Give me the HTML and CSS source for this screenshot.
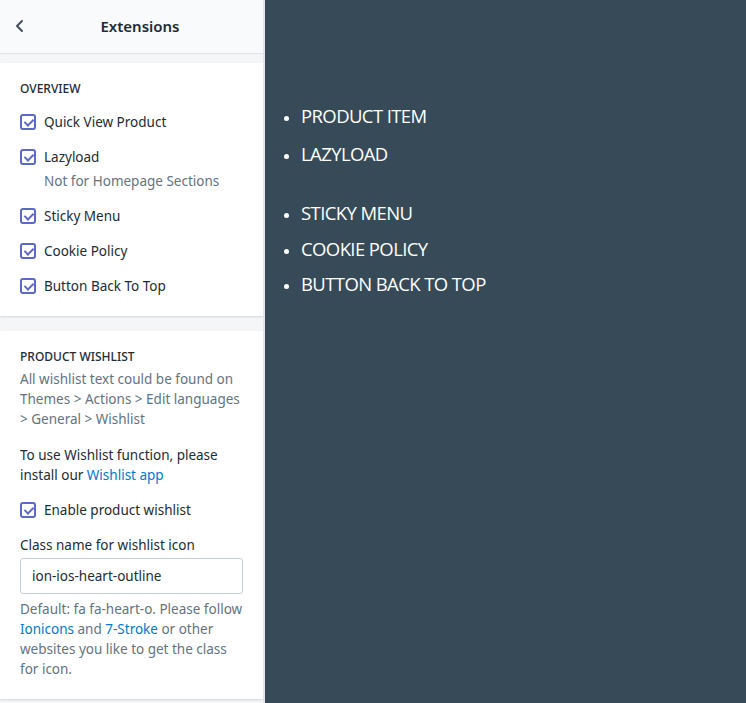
FILE: index.html
```html
<!DOCTYPE html>
<html>
<head>
<meta charset="utf-8">
<link rel="stylesheet" href="styles.css">
</head>
<body>
<div class="app">
  <aside class="sidebar">
    <header class="topbar">
      <span class="back"><svg width="12" height="14" viewBox="0 0 12 14"><path d="M8 2 L3 7 L8 12" fill="none" stroke="#454f5b" stroke-width="2" stroke-linecap="round" stroke-linejoin="round"/></svg></span>
      <h1 class="title">Extensions</h1>
    </header>
    <section class="card card-overview">
      <h2 class="heading">OVERVIEW</h2>
      <label class="check"><span class="box"></span>Quick View Product</label>
      <label class="check"><span class="box"></span>Lazyload</label>
      <p class="hint indent">Not for Homepage Sections</p>
      <label class="check"><span class="box"></span>Sticky Menu</label>
      <label class="check"><span class="box"></span>Cookie Policy</label>
      <label class="check"><span class="box"></span>Button Back To Top</label>
    </section>
    <section class="card card-wishlist">
      <h2 class="heading">PRODUCT WISHLIST</h2>
      <p class="hint">All wishlist text could be found on Themes &gt; Actions &gt; Edit languages &gt; General &gt; Wishlist</p>
      <p class="text">To use Wishlist function, please install our <a class="link">Wishlist app</a></p>
      <label class="check"><span class="box"></span>Enable product wishlist</label>
      <p class="label">Class name for wishlist icon</p>
      <div class="input">ion-ios-heart-outline</div>
      <p class="hint">Default: fa fa-heart-o. Please follow <a class="link">Ionicons</a> and <a class="link">7-Stroke</a> or other websites you like to get the class for icon.</p>
    </section>
  </aside>
  <main class="preview">
    <ul class="list">
      <li>PRODUCT ITEM</li>
      <li class="l2">LAZYLOAD</li>
      <li class="l3">STICKY MENU</li>
      <li class="l4">COOKIE POLICY</li>
      <li>BUTTON BACK TO TOP</li>
    </ul>
  </main>
</div>
</body>
</html>
```
FILE: styles.css
```css
* { box-sizing: border-box; }
html, body { margin: 0; padding: 0; height: 100%; overflow: hidden; }
body { font-family: "Noto Sans", "Open Sans", sans-serif; }
.app { display: flex; height: 703px; }
.sidebar {
  width: 265px;
  flex: none;
  background: #f4f6f8;
  border-right: 2px solid #e3e6e9;
  overflow: hidden;
}
.topbar {
  height: 54px;
  background: #f9fafb;
  border-bottom: 1px solid #dfe3e8;
  display: flex;
  align-items: center;
  position: relative;
  justify-content: center;
  padding-left: 17px;
  padding-bottom: 2px;
}
.back { position: absolute; left: 14px; top: 19px; display: flex; }
.title {
  margin: 0;
  font-size: 15px;
  font-weight: 600;
  color: #212b36;
}
.card {
  background: #fff;
  margin-top: 9px;
  box-shadow: 0 1px 2px rgba(63,63,68,0.18);
  padding: 16px 20px 0 20px;
  display: flex;
  flex-direction: column;
}
.card-overview { padding-bottom: 10px; }
.card-wishlist { margin-top: 15px; padding-bottom: 20px; }
.heading {
  margin: 0 0 8px;
  font-size: 12px;
  font-weight: 500;
  color: #212b36;
  line-height: 20px;
}
.check {
  display: flex;
  align-items: center;
  font-size: 13.5px;
  color: #212b36;
  line-height: 20px;
  margin-top: 5px;
  margin-bottom: 10px;
}
.box {
  width: 16px;
  height: 16px;
  border: 2px solid #5c6ac4;
  border-radius: 3px;
  margin-right: 8px;
  position: relative;
  flex: none;
}
.box::after {
  content: "";
  position: absolute;
  left: 3.5px;
  top: 0.5px;
  width: 4px;
  height: 7px;
  border-right: 2px solid #5c6ac4;
  border-bottom: 2px solid #5c6ac4;
  transform: rotate(45deg);
}
.hint {
  margin: 0;
  font-size: 13.5px;
  line-height: 20px;
  color: #637381;
}
.indent { margin: -6px 0 10px 24px; }
.card-wishlist .heading { margin-bottom: 2px; }
.text {
  margin: 16px 0 10px;
  font-size: 13.5px;
  line-height: 20px;
  color: #212b36;
}
.link { color: #007ace; }
.label {
  margin: 5px 0 3px;
  font-size: 13.5px;
  line-height: 20px;
  color: #212b36;
}
.input {
  height: 36px;
  border: 1px solid #c4cdd5;
  border-radius: 3px;
  padding: 0 11px;
  line-height: 34px;
  font-size: 13.5px;
  color: #212b36;
  margin-bottom: 5px;
}
.preview {
  flex: 1;
  background: #364a57;
  padding-top: 98px;
}
.list {
  margin: 0;
  padding: 0 0 0 36px;
  list-style: disc;
  color: #fff;
  font-family: "Open Sans", sans-serif;
  font-size: 18.5px;
  letter-spacing: -0.6px;
}
.list li { line-height: 35px; height: 35px; }
.list li::marker { font-size: 15px; }
.list li.l2 { margin-top: 3px; }
.list li.l3 { margin-top: 24px; }
.list li.l4 { margin-top: 1px; }
```
